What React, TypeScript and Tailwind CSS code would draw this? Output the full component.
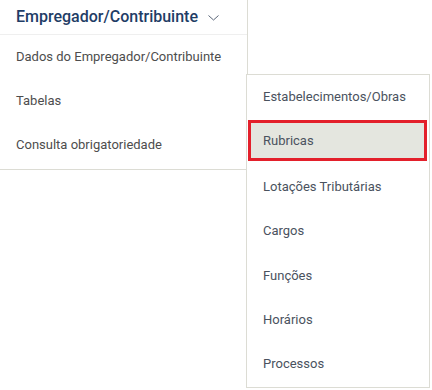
import React from "react";

const leftItems = ["Dados do Empregador/Contribuinte", "Tabelas", "Consulta obrigatoriedade"];
const subItems = ["Estabelecimentos/Obras", "Rubricas", "Lotações Tributárias", "Cargos", "Funções", "Horários", "Processos"];

export default function App() {
  return (
    <div className="relative w-[432px] h-[390px] bg-white overflow-hidden" style={{ fontFamily: "Roboto, 'Liberation Sans', sans-serif" }}>
      <div className="w-[248px] border-r border-b border-[#dcdcd4] pb-[2px]">
        <div className="h-[35px] border-b border-[#efefef] pl-4 flex items-center">
          <span className="text-[16px] font-medium text-[#1f3d66] leading-none">Empregador/Contribuinte</span>
          <svg className="ml-[10px] mt-[2px]" width="11" height="6" viewBox="0 0 11 6" fill="none">
            <polyline points="0.5,0.5 5.5,5 10.5,0.5" stroke="#5a6678" strokeWidth="1" />
          </svg>
        </div>
        {leftItems.map((t) => (
          <div key={t} className="h-[44px] pl-4 flex items-center text-[13px] text-[#4d4d4d]">
            {t}
          </div>
        ))}
      </div>

      <div className="absolute left-[246px] top-[74px] w-[184px] h-[314px] border border-[#dcdcd4] bg-white">
        {subItems.map((t) =>
          t === "Rubricas" ? (
            <div key={t} className="h-[44.33px]">
              <div className="mt-[1px] ml-[1px] w-[179px] h-[41px] border-[3px] border-[#e3202b] bg-[#e4e6df] pl-[12px] flex items-center text-[13px] text-[#4a525e]">
                {t}
              </div>
            </div>
          ) : (
            <div key={t} className="h-[44.33px] pl-4 flex items-center text-[13px] text-[#4a525e]">
              {t}
            </div>
          )
        )}
      </div>
    </div>
  );
}
